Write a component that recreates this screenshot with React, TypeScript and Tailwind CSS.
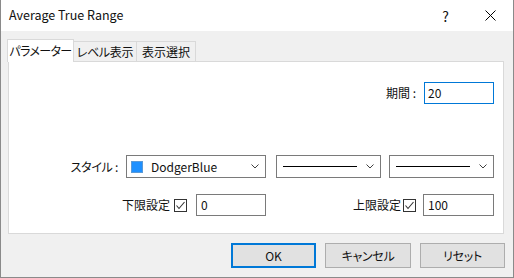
const Chevron = () => (
  <svg width="8" height="5" viewBox="0 0 8 5" className="shrink-0">
    <polyline points="0.5,0.5 4,4 7.5,0.5" fill="none" stroke="#404040" strokeWidth="1" />
  </svg>
);

const Check = () => (
  <div className="w-[13px] h-[13px] border border-[#333] bg-white flex items-center justify-center">
    <svg width="11" height="11" viewBox="0 0 11 11">
      <polyline points="1.5,5.5 4,8.5 9.5,2" fill="none" stroke="#333" strokeWidth="1.1" />
    </svg>
  </div>
);

const LineCombo = () => (
  <div className="w-[105px] h-[23px] border border-[#7a7a7a] bg-white flex items-center pl-[6px] pr-[6px]">
    <div className="w-[74px] h-[1.5px] bg-black" />
    <div className="flex-1" />
    <Chevron />
  </div>
);

const App = () => {
  return (
    <main className="w-[514px] h-[278px] bg-[#f0f0f0] border-l border-r border-b border-[#8a8a8a] flex flex-col text-[12px] text-[#111] font-['Noto_Sans_CJK_JP',sans-serif] [font-feature-settings:'palt'] leading-none overflow-hidden whitespace-nowrap">
      {/* Title bar */}
      <header className="h-[31px] bg-white flex items-center pl-[8px] shrink-0">
        <span className="flex-1 text-[12.5px]">Average True Range</span>
        <span className="text-[14px] mr-[36px]">?</span>
        <svg width="11" height="11" viewBox="0 0 11 11" className="mr-[17px]">
          <line x1="0.5" y1="0.5" x2="10.5" y2="10.5" stroke="#000" strokeWidth="1" />
          <line x1="10.5" y1="0.5" x2="0.5" y2="10.5" stroke="#000" strokeWidth="1" />
        </svg>
      </header>

      <section className="flex flex-col pl-[7px] pr-[8px] pt-[8px]">
        {/* Tabs */}
        <div className="flex items-end h-[22px] relative z-10">
          <div className="-ml-px w-[67px] h-[23px] -mb-px bg-white border-t border-l border-r border-[#d9d9d9] flex items-center justify-center tracking-[-0.6px]">
            パラメーター
          </div>
          <div className="w-[63px] h-[20px] bg-[#f0f0f0] border-t border-r border-[#d9d9d9] flex items-center justify-center tracking-[-0.3px]">
            レベル表示
          </div>
          <div className="w-[59px] h-[20px] bg-[#f0f0f0] border-t border-r border-[#d9d9d9] flex items-center justify-center">
            表示選択
          </div>
        </div>

        {/* Panel */}
        <div className="w-[496px] h-[173px] bg-white border border-[#d9d9d9] flex flex-col pr-[9px]">
          <div className="mt-[20px] h-[22px] flex items-center justify-end gap-[8px]">
            <span>期間 :</span>
            <div className="w-[70px] h-[22px] border border-[#0078d7] flex items-center pl-[3px]">20</div>
          </div>

          <div className="mt-[51px] h-[23px] flex items-center">
            <div className="w-[257px] flex items-center justify-end gap-[8px]">
              <span className="tracking-[-0.3px]">スタイル :</span>
              <div className="w-[140px] h-[23px] border border-[#7a7a7a] bg-white flex items-center pl-[4px] pr-[6px]">
                <div className="w-[12px] h-[12px] bg-[#1e90ff] border border-[#5a9ad8]" />
                <span className="ml-[8px] flex-1">DodgerBlue</span>
                <Chevron />
              </div>
            </div>
            <div className="flex-1 flex items-center justify-end gap-[8px]">
              <LineCombo />
              <LineCombo />
            </div>
          </div>

          <div className="mt-[16px] h-[22px] flex items-center">
            <div className="w-[257px] flex items-center justify-end">
              <span>下限設定</span>
              <div className="ml-[4px] mr-[9px]"><Check /></div>
              <div className="w-[70px] h-[22px] border border-[#7a7a7a] flex items-center pl-[4px]">0</div>
            </div>
            <div className="flex-1 flex items-center justify-end">
              <span>上限設定</span>
              <div className="ml-[2px] mr-[7px]"><Check /></div>
              <div className="w-[71px] h-[22px] border border-[#7a7a7a] flex items-center pl-[4px]">100</div>
            </div>
          </div>
        </div>

        {/* Buttons */}
        <div className="mt-[9px] flex justify-end gap-[9px]">
          <button className="w-[85px] h-[25px] bg-[#e1e1e1] border-2 border-[#0078d7]">OK</button>
          <button className="w-[86px] h-[25px] bg-[#e1e1e1] border border-[#adadad] tracking-[-0.3px]">キャンセル</button>
          <button className="w-[85px] h-[25px] bg-[#e1e1e1] border border-[#adadad] tracking-[-0.3px]">リセット</button>
        </div>
      </section>
    </main>
  );
};

export default App;
